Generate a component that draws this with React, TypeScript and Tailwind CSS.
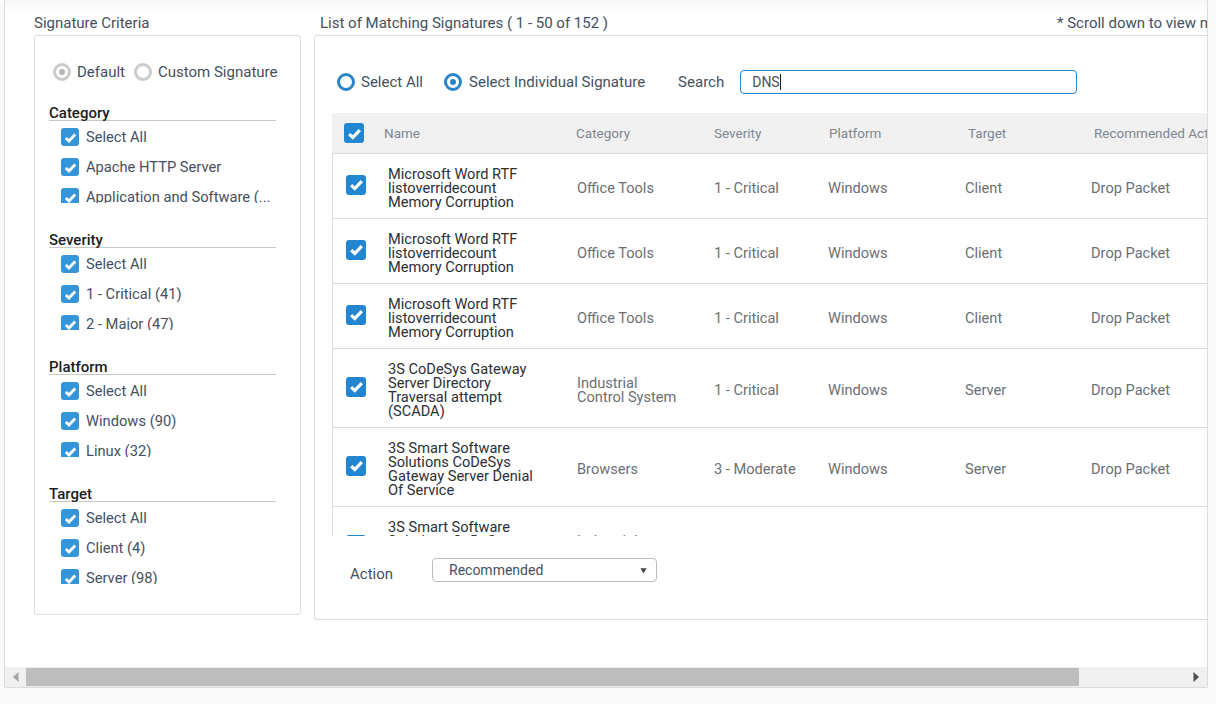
import React from "react";

type Sig = {
  name: string;
  category: string;
  severity: string;
  platform: string;
  target: string;
};

const criteria = [
  { title: "Category", items: ["Select All", "Apache HTTP Server", "Application and Software (..."] },
  { title: "Severity", items: ["Select All", "1 - Critical (41)", "2 - Major (47)"] },
  { title: "Platform", items: ["Select All", "Windows (90)", "Linux (32)"] },
  { title: "Target", items: ["Select All", "Client (4)", "Server (98)"] },
];

const word = "Microsoft Word RTF\nlistoverridecount\nMemory Corruption";

const signatures: Sig[] = [
  { name: word, category: "Office Tools", severity: "1 - Critical", platform: "Windows", target: "Client" },
  { name: word, category: "Office Tools", severity: "1 - Critical", platform: "Windows", target: "Client" },
  { name: word, category: "Office Tools", severity: "1 - Critical", platform: "Windows", target: "Client" },
  {
    name: "3S CoDeSys Gateway\nServer Directory\nTraversal attempt\n(SCADA)",
    category: "Industrial\nControl System",
    severity: "1 - Critical",
    platform: "Windows",
    target: "Server",
  },
  {
    name: "3S Smart Software\nSolutions CoDeSys\nGateway Server Denial\nOf Service",
    category: "Browsers",
    severity: "3 - Moderate",
    platform: "Windows",
    target: "Server",
  },
  {
    name: "3S Smart Software\nSolutions CoDeSys\nGateway Server Denial\nOf Service",
    category: "Industrial\nControl System",
    severity: "1 - Critical",
    platform: "Windows",
    target: "Server",
  },
];

const Check = ({ size }: { size: "sm" | "lg" }) => (
  <span
    className={`flex shrink-0 items-center justify-center rounded-[3px] ${
      size === "sm" ? "h-[18px] w-[18px] bg-[#3595d9]" : "h-[20px] w-[20px] bg-[#2287d0]"
    }`}
  >
    <svg viewBox="0 0 16 16" className={size === "sm" ? "h-[15px] w-[15px]" : "h-[17px] w-[17px]"} fill="none">
      <path d="M3 8.5 6.4 11.8 13 4.8" stroke="#fff" strokeWidth="3" />
    </svg>
  </span>
);

const Radio = ({ on, muted }: { on?: boolean; muted?: boolean }) => (
  <span
    className={`flex h-[18px] w-[18px] shrink-0 items-center justify-center rounded-full border-[3px] bg-white ${
      muted ? "border-[#cbcbcb]" : "border-[#2a86c8]"
    }`}
  >
    {on && <span className={`h-[6px] w-[6px] rounded-full ${muted ? "bg-[#b5b5b5]" : "bg-[#2a86c8]"}`} />}
  </span>
);

export default function App() {
  return (
    <div className="h-[704px] w-[1216px] overflow-hidden bg-[#fafafa] pl-[4px] font-['Roboto',sans-serif] text-[15px] text-[#44505f]">
      <div className="flex h-[688px] w-[1204px] flex-col overflow-hidden rounded-b-[2px] border-x border-b border-[#dcdcdc] bg-[linear-gradient(to_bottom,#f5f6f6,#ffffff_12px)]">
        <div className="flex h-[667px] shrink-0 gap-[13px] overflow-hidden pl-[29px] pt-[13px]">
          {/* left column */}
          <div className="w-[267px] shrink-0">
            <div className="h-[22px] leading-[20px]">Signature Criteria</div>
            <div className="h-[580px] rounded-[3px] border border-[#dedede] bg-white pl-[14px] pt-[26px]">
              <div className="flex h-[20px] items-center pl-[4px]">
                <Radio on muted />
                <span className="ml-[6px]">Default</span>
                <span className="ml-[9px]"><Radio muted /></span>
                <span className="ml-[6px]">Custom Signature</span>
              </div>
              <div className="mt-[25px] flex flex-col gap-[31px]">
                {criteria.map((c) => (
                  <div key={c.title}>
                    <div className="h-[14px] w-[227px] border-b border-[#c8c8c8] leading-[14px] font-medium text-[#1c1c1c]">
                      <span className="relative top-[-1px]">{c.title}</span>
                    </div>
                    <div className="h-[82px] overflow-hidden pl-[12px] pt-[7px] text-[14.7px]">
                      {c.items.map((it) => (
                        <div key={it} className="mb-[12px] flex h-[18px] items-center gap-[7px] whitespace-nowrap">
                          <Check size="sm" />
                          <span>{it}</span>
                        </div>
                      ))}
                    </div>
                  </div>
                ))}
              </div>
            </div>
          </div>

          {/* right column */}
          <div className="w-[1000px] shrink-0">
            <div className="flex h-[22px] whitespace-nowrap pl-[6px] leading-[20px]">
              <span className="w-[737px]">List of Matching Signatures ( 1 - 50 of 152 )</span>
              <span>* Scroll down to view more signatures</span>
            </div>
            <div className="h-[585px] rounded-l-[3px] border border-r-0 border-[#dedede] bg-white pl-[17px] pt-[35px]">
              <div className="flex h-[22px] items-center whitespace-nowrap pl-[5px]">
                <Radio />
                <span className="ml-[6px]">Select All</span>
                <span className="ml-[21px]"><Radio on /></span>
                <span className="ml-[7px]">Select Individual Signature</span>
                <span className="ml-[33px]">Search</span>
                <div className="ml-[16px] flex h-[24px] w-[337px] items-center rounded-[4px] border border-[#2a86c8] pl-[11px] text-[14px]">
                  <span className="border-r border-[#1c1c1c] leading-[16px]">DNS</span>
                </div>
              </div>

              <div className="mt-[20px] flex h-[41px] items-center border-b border-[#dcdcdc] bg-[#f1f1f1] pl-[12px] text-[13.5px] text-[#7d8791]">
                <Check size="lg" />
                <span className="ml-[20px] w-[192px]">Name</span>
                <span className="w-[138px]">Category</span>
                <span className="w-[115px]">Severity</span>
                <span className="w-[139px]">Platform</span>
                <span className="w-[126px]">Target</span>
                <span className="whitespace-nowrap">Recommended Action</span>
              </div>

              <div className="h-[382px] overflow-hidden text-[14.6px]">
                {signatures.map((s, i) => (
                  <div
                    key={i}
                    className="flex items-center border-b border-l border-[#dcdcdc] pb-[9px] pl-[13px] pt-[13px] leading-[14px] text-[#6a6f76]"
                  >
                    <span className="mb-[7px]"><Check size="lg" /></span>
                    <span className="ml-[22px] w-[189px] whitespace-pre-line text-[#2a2f38]">{s.name}</span>
                    <span className="w-[137px] whitespace-pre-line">{s.category}</span>
                    <span className="w-[114px]">{s.severity}</span>
                    <span className="w-[137px]">{s.platform}</span>
                    <span className="w-[126px]">{s.target}</span>
                    <span className="whitespace-nowrap">Drop Packet</span>
                  </div>
                ))}
              </div>

              <div className="mt-[22px] flex items-start pl-[18px]">
                <span className="mt-[5px] w-[82px]">Action</span>
                <div className="flex h-[24px] w-[225px] items-center justify-between rounded-[4px] border border-[#b9bdc2] pl-[16px] pr-[9px] text-[14px] text-[#3f5168]">
                  <span>Recommended</span>
                  <svg viewBox="0 0 8 8" className="h-[7px] w-[7px]">
                    <path d="M0.5 1.5h7L4 7.5z" fill="#444" />
                  </svg>
                </div>
              </div>
            </div>
          </div>
        </div>

        {/* horizontal scrollbar */}
        <div className="flex h-[20px] shrink-0 items-center bg-[#f0f0f0]">
          <div className="flex w-[21px] justify-center">
            <svg viewBox="0 0 6 10" className="h-[10px] w-[6px]">
              <path d="M5.5 0v10L0 5z" fill="#a3a3a3" />
            </svg>
          </div>
          <div className="h-[18px] w-[1053px] bg-[#bdbdbd]" />
          <div className="flex flex-1 justify-end pr-[8px]">
            <svg viewBox="0 0 6 10" className="h-[10px] w-[6px]">
              <path d="M0.5 0v10L6 5z" fill="#505050" />
            </svg>
          </div>
        </div>
      </div>
    </div>
  );
}
